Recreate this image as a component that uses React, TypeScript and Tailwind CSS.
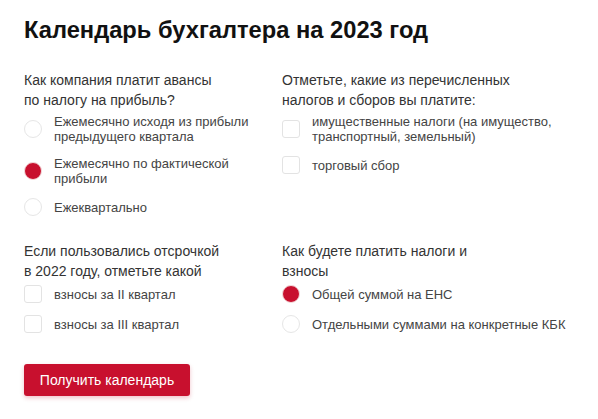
import React from "react"

type Opt = { label: string; checked?: boolean }

function Radio({ checked }: { checked?: boolean }) {
  return (
    <span
      className={
        "h-[18px] w-[18px] shrink-0 rounded-full border " +
        (checked ? "border-[#f3dcdc] bg-[#c8102e]" : "border-[#e6e6e6] bg-white")
      }
    />
  )
}

function Check() {
  return <span className="h-[18px] w-[18px] shrink-0 rounded-[3px] border border-[#e3e3e3] bg-white" />
}

function Group({ title, items, kind }: { title: string[]; items: Opt[]; kind: "radio" | "check" }) {
  return (
    <div>
      <p className="text-[14px] leading-[20px] text-[#333]">
        {title.map((t) => (
          <span key={t} className="block">
            {t}
          </span>
        ))}
      </p>
      <div className="mt-[4px] flex flex-col gap-[12px]">
        {items.map((o) => (
          <label key={o.label} className="flex items-center gap-[12px]">
            {kind === "radio" ? <Radio checked={o.checked} /> : <Check />}
            <span className="text-[13px] leading-[15px] text-[#444]">
              {o.label.split("\n").map((l) => (
                <span key={l} className="block">
                  {l}
                </span>
              ))}
            </span>
          </label>
        ))}
      </div>
    </div>
  )
}

export default function App() {
  return (
    <div className="min-h-screen bg-white px-[24px] pt-[16px] font-['Liberation_Sans',Arial,sans-serif]">
      <h1 className="text-[23.7px] font-bold leading-[28px] text-[#111]">Календарь бухгалтера на 2023 год</h1>

      <div className="mt-[26px] grid grid-cols-[258px_1fr] gap-y-[25px]">
        <Group
          kind="radio"
          title={["Как компания платит авансы", "по налогу на прибыль?"]}
          items={[
            { label: "Ежемесячно исходя из прибыли\nпредыдущего квартала" },
            { label: "Ежемесячно по фактической\nприбыли", checked: true },
            { label: "Ежеквартально" },
          ]}
        />
        <Group
          kind="check"
          title={["Отметьте, какие из перечисленных", "налогов и сборов вы платите:"]}
          items={[
            { label: "имущественные налоги (на имущество,\nтранспортный, земельный)" },
            { label: "торговый сбор" },
          ]}
        />
        <Group
          kind="check"
          title={["Если пользовались отсрочкой", "в 2022 году, отметьте какой"]}
          items={[{ label: "взносы за II квартал" }, { label: "взносы за III квартал" }]}
        />
        <Group
          kind="radio"
          title={["Как будете платить налоги и", "взносы"]}
          items={[
            { label: "Общей суммой на ЕНС", checked: true },
            { label: "Отдельными суммами на конкретные КБК" },
          ]}
        />
      </div>

      <button className="mt-[31px] h-[32px] w-[166px] rounded-[3px] bg-[#c8102e] text-[14px] text-white shadow-[0_2px_4px_rgba(200,16,46,0.25)]">
        Получить календарь
      </button>
    </div>
  )
}
